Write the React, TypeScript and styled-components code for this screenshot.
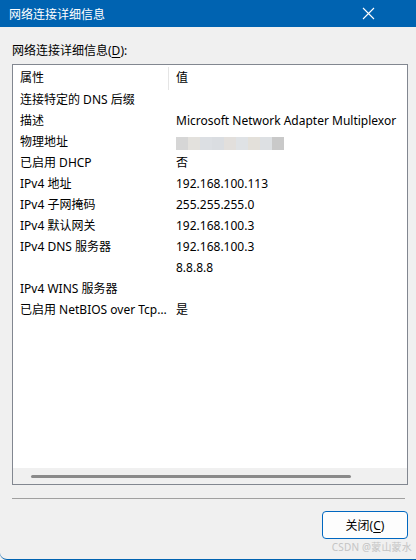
import styled, { createGlobalStyle } from "styled-components";

const GlobalStyle = createGlobalStyle`
  html, body {
    margin: 0;
    padding: 0;
    background: #f0f0f0;
  }
  body {
    font-family: "Noto Sans", "Noto Sans CJK SC", sans-serif;
    font-size: 12px;
    color: #000;
  }
`;

interface Row {
  name: string;
  value: string;
  blurred?: boolean;
}

const rows: Row[] = [
  { name: "连接特定的 DNS 后缀", value: "" },
  { name: "描述", value: "Microsoft Network Adapter Multiplexor" },
  { name: "物理地址", value: "", blurred: true },
  { name: "已启用 DHCP", value: "否" },
  { name: "IPv4 地址", value: "192.168.100.113" },
  { name: "IPv4 子网掩码", value: "255.255.255.0" },
  { name: "IPv4 默认网关", value: "192.168.100.3" },
  { name: "IPv4 DNS 服务器", value: "192.168.100.3" },
  { name: "", value: "8.8.8.8" },
  { name: "IPv4 WINS 服务器", value: "" },
  { name: "已启用 NetBIOS over Tcpip", value: "是" },
];

// mosaic colours for the blurred MAC address
const blurColors = ["#d6d6d6", "#e3e1dd", "#dcdfe3", "#dadde1", "#e2dfdc", "#dfe2e5", "#e3e0da", "#dde0e3", "#c9c9c9"];

const Window = styled.div`
  position: relative;
  width: 416px;
  height: 560px;
  display: flex;
  flex-direction: column;
  background: #f0f0f0;
  border-bottom: 1px solid #0063b1;
  border-bottom-left-radius: 7px;
  box-sizing: border-box;
  overflow: hidden;
`;

const TitleBar = styled.div`
  height: 27px;
  flex: none;
  background: #0063b1;
  color: #fff;
  display: flex;
  align-items: center;
  justify-content: space-between;
  padding: 0 41px 0 9px;
  font-size: 12px;
`;

const Content = styled.div`
  flex: 1;
  display: flex;
  flex-direction: column;
  padding: 16px 8px 0 12px;
`;

const Label = styled.div`
  line-height: 16px;
  height: 16px;
  margin-bottom: 5px;
  & u {
    text-decoration-thickness: 1px;
    text-underline-offset: 2px;
  }
`;

const ListBox = styled.div`
  width: 396px;
  height: 421px;
  box-sizing: border-box;
  border: 1px solid #828790;
  background: #fff;
  display: flex;
  flex-direction: column;
`;

const Rows = styled.div`
  flex: 1;
  overflow: hidden;
`;

const HeaderRow = styled.div`
  display: grid;
  grid-template-columns: 156px 1fr;
  height: 24px;
  align-items: center;
`;

const HeaderCell = styled.div<{ $sep?: boolean }>`
  padding-left: 7px;
  box-sizing: border-box;
  border-right: ${(p) => (p.$sep ? "1px solid #e5e5e5" : "none")};
  margin-top: 2px;
  height: 23px;
  line-height: 21px;
`;

const DataRow = styled.div`
  display: grid;
  grid-template-columns: 156px 1fr;
  height: 21px;
  align-items: center;
  line-height: 21px;
`;

const Cell = styled.div<{ $first?: boolean }>`
  padding-left: 7px;
  padding-right: ${(p) => (p.$first ? "2px" : "0")};
  white-space: nowrap;
  overflow: hidden;
  text-overflow: ${(p) => (p.$first ? "ellipsis" : "clip")};
`;

const Blur = styled.div`
  display: flex;
  height: 13px;
  margin-top: 3px;
  align-items: flex-end;
`;

const BlurBlock = styled.span`
  width: 12px;
  height: 13px;
`;

const ScrollTrack = styled.div`
  height: 16px;
  flex: none;
  background: #f0f0f0;
  display: flex;
  align-items: center;
  padding-left: 18px;
`;

const ScrollThumb = styled.div`
  width: 320px;
  height: 3px;
  border-radius: 2px;
  background: #8a8a8a;
`;

const Divider = styled.div`
  height: 1px;
  width: 393px;
  background: #a0a0a0;
  margin-top: 13px;
`;

const Footer = styled.div`
  display: flex;
  justify-content: flex-end;
  padding-top: 12px;
`;

const Button = styled.button`
  width: 86px;
  height: 28px;
  box-sizing: border-box;
  border: 1px solid #0067c0;
  border-radius: 4px;
  background: #fdfdfd;
  font-family: inherit;
  font-size: 12px;
  color: #000;
  padding: 0;
  & u {
    text-underline-offset: 2px;
  }
`;

const Watermark = styled.div`
  position: absolute;
  right: 4px;
  bottom: 5px;
  font-size: 10px;
  color: #c4c4c4;
  letter-spacing: 0.2px;
`;

export default function App() {
  return (
    <>
      <GlobalStyle />
      <Window>
        <TitleBar>
          <span>网络连接详细信息</span>
          <svg width="13" height="13" viewBox="0 0 13 13">
            <path d="M1 1 L12 12 M12 1 L1 12" stroke="#fff" strokeWidth="1.1" />
          </svg>
        </TitleBar>
        <Content>
          <Label>
            网络连接详细信息(<u>D</u>):
          </Label>
          <ListBox>
            <Rows>
              <HeaderRow>
                <HeaderCell $sep>属性</HeaderCell>
                <HeaderCell>值</HeaderCell>
              </HeaderRow>
              {rows.map((r, i) => (
                <DataRow key={i}>
                  <Cell $first>{r.name}</Cell>
                  <Cell>
                    {r.blurred ? (
                      <Blur>
                        {blurColors.map((c, j) => (
                          <BlurBlock key={j} style={{ background: c }} />
                        ))}
                      </Blur>
                    ) : (
                      r.value
                    )}
                  </Cell>
                </DataRow>
              ))}
            </Rows>
            <ScrollTrack>
              <ScrollThumb />
            </ScrollTrack>
          </ListBox>
          <Divider />
          <Footer>
            <Button>
              关闭(<u>C</u>)
            </Button>
          </Footer>
        </Content>
        <Watermark>CSDN @蒙山蒙水</Watermark>
      </Window>
    </>
  );
}
